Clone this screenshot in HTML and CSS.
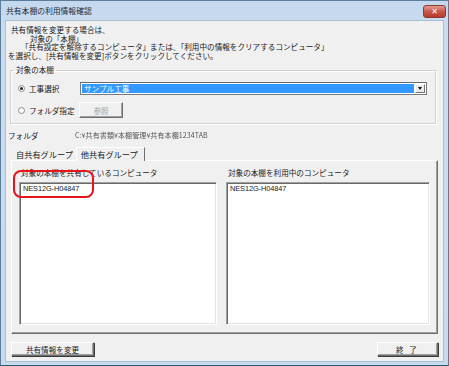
FILE: index.html
```html
<!DOCTYPE html>
<html lang="ja">
<head>
    <meta charset="UTF-8">
    <title>共有本棚の利用情報確認</title>
    <link rel="stylesheet" href="styles.css">
</head>
<body>
    <div class="window">
        <!-- Title bar -->
        <div class="titlebar">
            <span class="title">共有本棚の利用情報確認</span>
            <span class="close-btn">&#x2715;</span>
        </div>

        <div class="client">
            <!-- Instructions -->
            <div class="notes">
                <div class="line l1">共有情報を変更する場合は、</div>
                <div class="line l2">対象の「本棚」</div>
                <div class="line l3">「共有設定を解除するコンピュータ」または、「利用中の情報をクリアするコンピュータ」</div>
                <div class="line l4">を選択し、[共有情報を変更]ボタンをクリックしてください。</div>
            </div>

            <!-- Target bookshelf -->
            <fieldset class="group">
                <legend>対象の本棚</legend>
                <div class="row">
                    <span class="radio checked"></span>
                    <span class="radio-label">工事選択</span>
                    <div class="combo">
                        <span class="combo-value">サンプル工事</span>
                        <span class="combo-arrow"></span>
                    </div>
                </div>
                <div class="row">
                    <span class="radio"></span>
                    <span class="radio-label">フォルダ指定</span>
                    <span class="btn btn-ref">参照</span>
                </div>
            </fieldset>

            <div class="folder-row">
                <span class="folder-label">フォルダ</span>
                <span class="folder-path">C:¥共有書類¥本棚管理¥共有本棚1234TAB</span>
            </div>

            <!-- Tabs -->
            <div class="tabs">
                <span class="tab">自共有グループ</span>
                <span class="tab active">他共有グループ</span>
            </div>
            <div class="panel">
                <div class="col col-left">
                    <div class="col-label">対象の本棚を共有しているコンピュータ</div>
                    <div class="list">
                        <div class="item">NES12G-H04847</div>
                    </div>
                    <span class="mark"></span>
                </div>
                <div class="col col-right">
                    <div class="col-label">対象の本棚を利用中のコンピュータ</div>
                    <div class="list">
                        <div class="item">NES12G-H04847</div>
                    </div>
                </div>
            </div>

            <div class="footer">
                <span class="btn btn-change">共有情報を変更</span>
                <span class="btn btn-close">終 了</span>
            </div>
        </div>
    </div>
</body>
</html>
```

FILE: styles.css
```css
body {
    margin: 0;
    background: #ffffff;
    font-family: "Noto Sans CJK JP", "Liberation Sans", sans-serif;
    font-size: 7.6px;
    color: #1a1a1a;
}

.window {
    width: 449px;
    height: 366px;
    box-sizing: border-box;
    display: flex;
    flex-direction: column;
    background: linear-gradient(#c4d8ee, #cbdcef 30px, #c8daee);
    border: 1px solid #5c7c9c;
    border-bottom-color: #2f5a6e;
    padding: 0 4px 3px 4px;
}

.titlebar {
    height: 19px;
    display: flex;
    align-items: center;
    justify-content: space-between;
}

.title {
    padding-left: 1px;
    font-size: 7.8px;
    color: #1c2a3a;
}

.close-btn {
    width: 23px;
    height: 13px;
    margin-right: -2px;
    margin-top: 1px;
    border-radius: 3px;
    border: 1px solid #8a3a32;
    background: linear-gradient(#e19d8f, #c9574a 50%, #b83a2c);
    color: #fff;
    font-family: "DejaVu Sans", sans-serif;
    font-size: 8px;
    font-weight: bold;
    display: flex;
    align-items: center;
    justify-content: center;
    box-sizing: border-box;
}

.client {
    flex: 1;
    background: #f0f0f0;
    border: 1px solid #a9bfd6;
    display: flex;
    flex-direction: column;
}

/* Instructions */
.notes {
    padding-top: 5px;
}

.line {
    height: 8.5px;
    line-height: 8.5px;
    white-space: nowrap;
}

.l1 { padding-left: 5px; }
.l2 { padding-left: 24px; }
.l3 { padding-left: 15px; }
.l4 { padding-left: 2px; }

/* Group box */
.group {
    margin: 6px 7px 0 4px;
    padding: 7px 0 4px 7px;
    height: 58px;
    box-sizing: border-box;
    border: 1px solid #d2d2d2;
    box-shadow: inset 1px 1px 0 #ffffff, 1px 1px 0 #ffffff;
    display: flex;
    flex-direction: column;
    gap: 8px;
}

.group legend {
    padding: 0 2px;
    margin-left: -4px;
    line-height: 8px;
}

.row {
    display: flex;
    align-items: center;
    height: 14px;
}

.radio {
    width: 7px;
    height: 7px;
    box-sizing: border-box;
    border-radius: 50%;
    border: 1px solid #8c8c8c;
    background: #ffffff;
    display: flex;
    align-items: center;
    justify-content: center;
}

.radio.checked::after {
    content: '';
    width: 3px;
    height: 3px;
    border-radius: 50%;
    background: #222;
}

.radio-label {
    margin-left: 4px;
    width: 50px;
}

.combo {
    margin-left: 1px;
    width: 347px;
    height: 13px;
    box-sizing: border-box;
    border: 1px solid #7b7b7b;
    border-top-color: #6a6a6a;
    background: #fff;
    padding: 1px;
    display: flex;
}

.combo-value {
    flex: 1;
    background: #3399ff;
    color: #fff;
    line-height: 9px;
    padding-left: 2px;
}

.combo-arrow {
    width: 10px;
    margin-left: 1px;
    background: #eaeaea;
    border: 1px solid;
    border-color: #fff #777 #777 #fff;
    box-sizing: border-box;
    display: flex;
    align-items: center;
    justify-content: center;
}

.combo-arrow::after {
    content: '';
    border-left: 2.5px solid transparent;
    border-right: 2.5px solid transparent;
    border-top: 3px solid #111;
}

.btn {
    display: flex;
    align-items: center;
    justify-content: center;
    box-sizing: border-box;
    background: #f0f0f0;
    border: 1px solid;
    border-color: #ffffff #6e6e6e #6e6e6e #ffffff;
    box-shadow: inset -1px -1px 0 #a0a0a0, 1px 1px 0 #3a3a3a;
}

.btn-ref {
    width: 44px;
    height: 16px;
    color: #a3a3a3;
    box-shadow: inset -1px -1px 0 #a0a0a0;
}

/* Folder line */
.folder-row {
    display: flex;
    align-items: center;
    height: 12px;
    margin-top: 5px;
    padding-left: 2px;
}

.folder-label {
    width: 67px;
}

.folder-path {
    color: #555;
    font-size: 7px;
    letter-spacing: 0.1px;
    filter: blur(0.7px);
}

/* Tabs */
.tabs {
    display: flex;
    align-items: flex-end;
    height: 14px;
    margin-top: 5px;
    padding-left: 6px;
    font-size: 8.2px;
}

.tab {
    height: 12px;
    line-height: 12px;
    padding: 0 3px 0 4px;
}

.tab.active {
    height: 14px;
    line-height: 12px;
    padding: 0 6px 0 4px;
    border-left: 1px solid #ffffff;
    border-top: 1px solid #ffffff;
    border-right: 1px solid #6e6e6e;
    box-sizing: border-box;
    margin-bottom: -1px;
    background: #f0f0f0;
    position: relative;
    z-index: 1;
}

.panel {
    margin: 0 5px 0 5px;
    height: 174px;
    box-sizing: border-box;
    border: 1px solid;
    border-color: #ffffff #6e6e6e #6e6e6e #ffffff;
    box-shadow: inset -1px -1px 0 #a0a0a0;
    display: flex;
    gap: 9px;
    padding: 6px 0 0 7px;
}

.col {
    display: flex;
    flex-direction: column;
    position: relative;
}

.col-left { width: 198px; }
.col-right { width: 204px; }

.col-label {
    height: 11px;
    line-height: 11px;
    padding-left: 2px;
    white-space: nowrap;
}

.list {
    margin-top: 4px;
    height: 143px;
    box-sizing: border-box;
    background: #fff;
    border: 1px solid;
    border-color: #a0a0a0 #ffffff #ffffff #a0a0a0;
    box-shadow: inset 1px 1px 0 #696969, inset -1px -1px 0 #e3e3e3;
    padding: 2px 3px;
}

.item {
    font-family: "Liberation Sans", sans-serif;
    font-size: 7.4px;
    line-height: 8px;
    letter-spacing: -0.1px;
}

/* Red annotation drawn over the list */
.mark {
    position: absolute;
    left: -6px;
    top: 3px;
    width: 81px;
    height: 28px;
    box-sizing: border-box;
    border: 2.5px solid #e8141b;
    border-radius: 8px;
}

/* Footer buttons */
.footer {
    display: flex;
    justify-content: space-between;
    margin: 8px 5px 0 5px;
}

.btn-change {
    width: 83px;
    height: 14px;
}

.btn-close {
    width: 61px;
    height: 14px;
    letter-spacing: 2px;
}
```
